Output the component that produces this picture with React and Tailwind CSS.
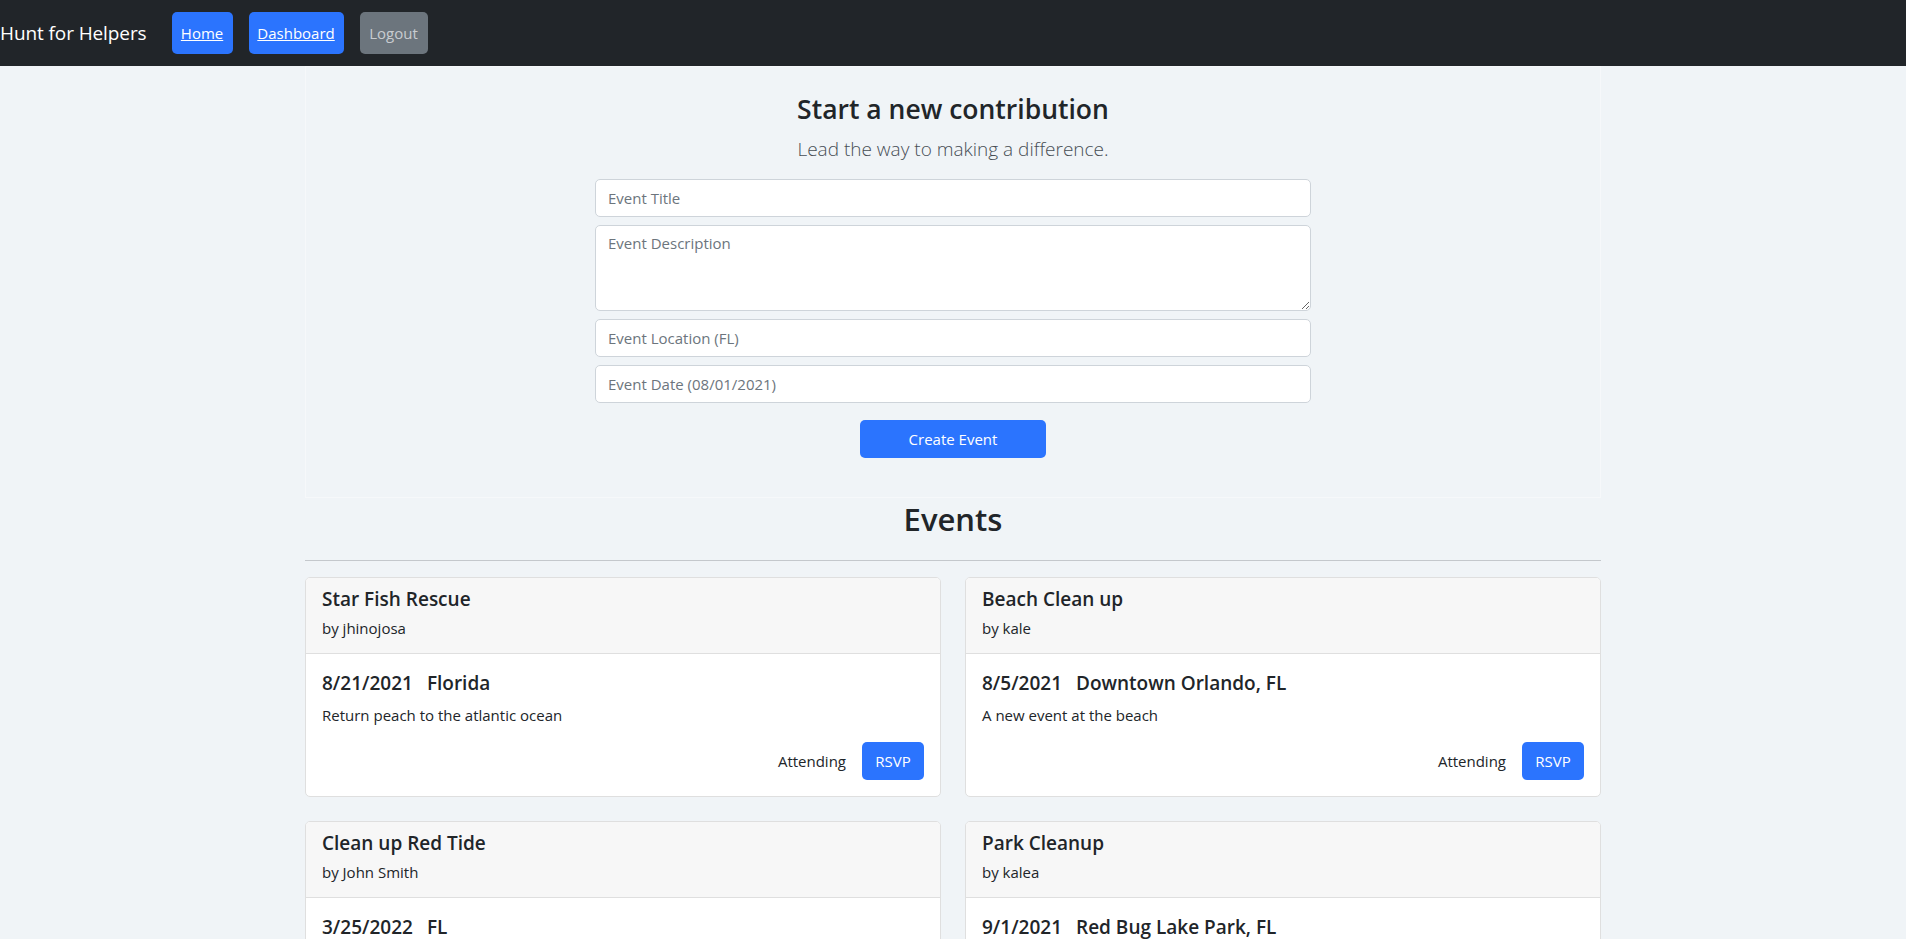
import React from "react";

const events = [
  {
    title: "Star Fish Rescue",
    author: "jhinojosa",
    date: "8/21/2021",
    location: "Florida",
    description: "Return peach to the atlantic ocean",
  },
  {
    title: "Beach Clean up",
    author: "kale",
    date: "8/5/2021",
    location: "Downtown Orlando, FL",
    description: "A new event at the beach",
  },
  {
    title: "Clean up Red Tide",
    author: "John Smith",
    date: "3/25/2022",
    location: "FL",
    description: "Help clean up the beaches after the red tide",
  },
  {
    title: "Park Cleanup",
    author: "kalea",
    date: "9/1/2021",
    location: "Red Bug Lake Park, FL",
    description: "Pick up trash around the lake",
  },
];

const EventCard = ({ event }) => (
  <div className="bg-white border border-[#dfdfdf] rounded-[5px] overflow-hidden">
    <div className="bg-[#f7f7f7] border-b border-[#dfdfdf] px-4 pt-[9px] pb-2">
      <h5 className="text-[19px] leading-[24px] font-[550] mb-2">{event.title}</h5>
      <h6 className="text-[15px] leading-[19px] font-medium mb-[7px]">by {event.author}</h6>
    </div>
    <div className="px-4 pt-[17px] pb-4">
      <h5 className="text-[19px] leading-[24px] font-[550] mb-2 flex gap-[14px]">
        <span>{event.date}</span>
        <span>{event.location}</span>
      </h5>
      <p className="text-[15px] leading-[24px] mb-[15px]">{event.description}</p>
      <div className="flex justify-end items-center">
        <span className="text-[15px] mr-4">Attending</span>
        <button className="w-[62px] h-[38px] rounded-[5px] bg-[#2b74fe] text-white text-[15px]">
          RSVP
        </button>
      </div>
    </div>
  </div>
);

export default function App() {
  return (
    <div
      className="min-h-screen bg-[#f0f4f7] text-[#212529]"
      style={{ fontFamily: '"Open Sans", "Noto Sans", sans-serif' }}
    >
      {/* Navbar */}
      <nav className="h-[66px] bg-[#212529] flex items-center">
        <span className="text-white text-[19px] tracking-[-0.1px]">Hunt for Helpers</span>
        <a href="#" className="ml-[25px] w-[61px] h-[42px] flex items-center justify-center rounded-[5px] bg-[#2b74fe] text-white text-[15px] underline">
          Home
        </a>
        <a href="#" className="ml-4 w-[95px] h-[42px] flex items-center justify-center rounded-[5px] bg-[#2b74fe] text-white text-[15px] underline">
          Dashboard
        </a>
        <button className="ml-4 w-[68px] h-[42px] flex items-center justify-center rounded-[5px] bg-[#6c757d] text-[#c8ccd0] text-[15px]">
          Logout
        </button>
      </nav>

      <div className="w-[1296px] mx-auto">
        {/* New contribution */}
        <div className="border border-[#f6f8fa] pt-[25px] pb-[39px] flex flex-col items-center">
          <h3 className="text-[26.5px] leading-[34px] font-semibold mb-2">Start a new contribution</h3>
          <p className="text-[19px] leading-[30px] font-light text-[#474e55] mb-[15px]">
            Lead the way to making a difference.
          </p>
          <form className="w-[716px] flex flex-col gap-2" onSubmit={(e) => e.preventDefault()}>
            <input
              className="h-[38px] px-3 bg-white border border-[#ced4da] rounded-[5px] text-[15px] placeholder:text-[#6c757d] outline-none"
              placeholder="Event Title"
            />
            <textarea
              rows={3}
              className="h-[86px] px-3 py-[6px] bg-white border border-[#ced4da] rounded-[5px] text-[15px] placeholder:text-[#6c757d] outline-none"
              placeholder="Event Description"
            />
            <input
              className="h-[38px] px-3 bg-white border border-[#ced4da] rounded-[5px] text-[15px] placeholder:text-[#6c757d] outline-none"
              placeholder="Event Location (FL)"
            />
            <input
              className="h-[38px] px-3 bg-white border border-[#ced4da] rounded-[5px] text-[15px] placeholder:text-[#6c757d] outline-none"
              placeholder="Event Date (08/01/2021)"
            />
            <div className="flex justify-center mt-[9px]">
              <button className="w-[186px] h-[38px] rounded-[5px] bg-[#2b74fe] text-white text-[15px]">
                Create Event
              </button>
            </div>
          </form>
        </div>

        {/* Events */}
        <h2 className="text-center text-[31px] leading-[38px] font-semibold mt-[2px]">Events</h2>
        <hr className="mt-[22px] mb-4 border-t border-[#c4c8cc]" />
        <div className="grid grid-cols-2 gap-x-6 gap-y-6 pb-6">
          {events.map((ev) => (
            <EventCard key={ev.title} event={ev} />
          ))}
        </div>
      </div>
    </div>
  );
}
